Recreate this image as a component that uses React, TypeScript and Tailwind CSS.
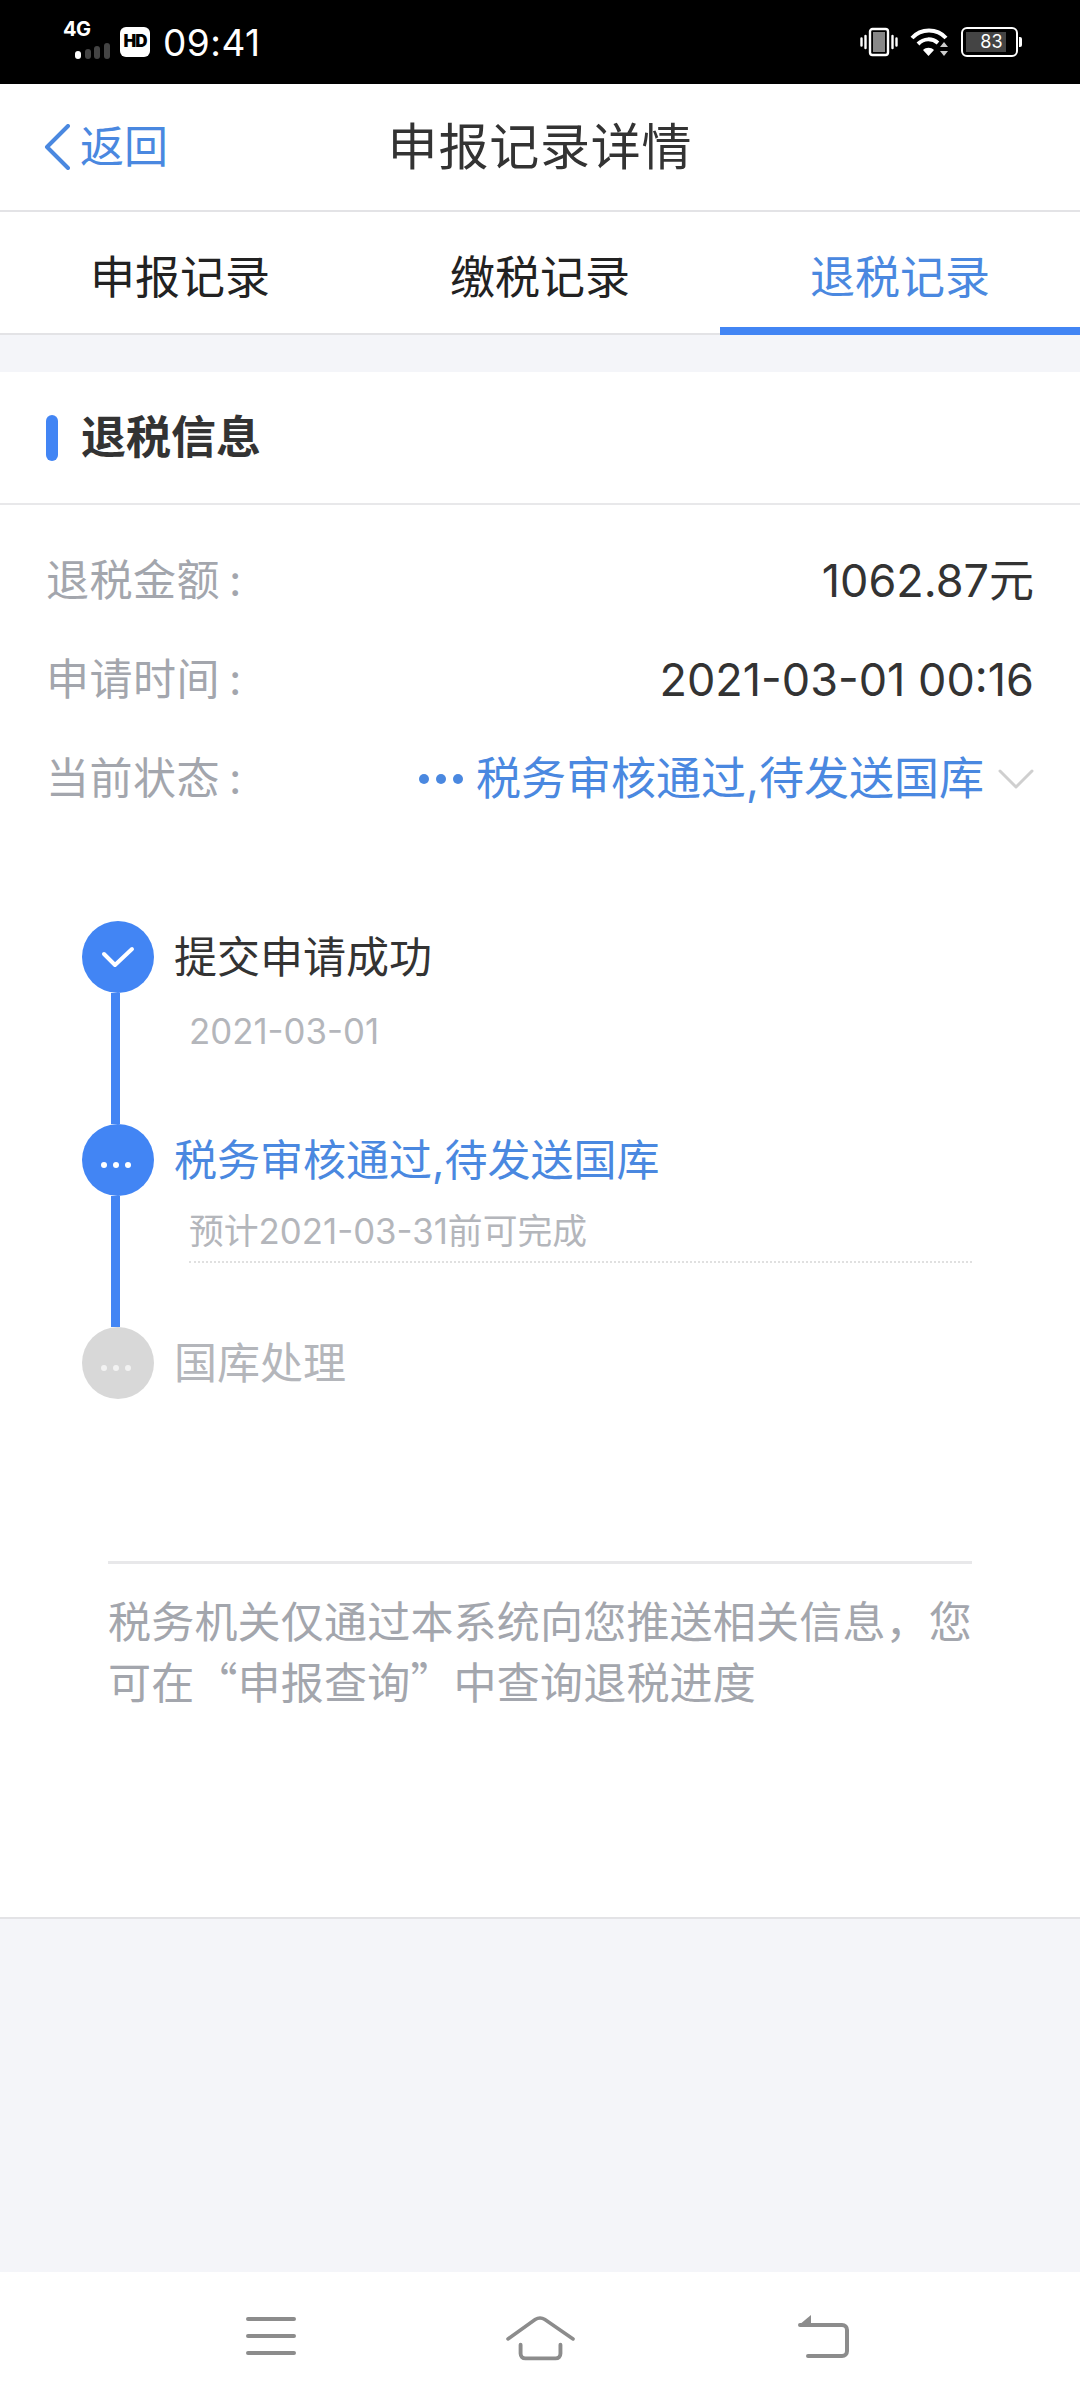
const FONT = "font-['Inter','Noto_Sans_CJK_SC',sans-serif]";

function StatusBar() {
  return (
    <div className="h-[84px] bg-black flex items-center justify-between pl-[63px] pr-[58px] text-white">
      <div className="flex items-center">
        <div className="w-[48px] h-[36px] relative mt-[-2px]">
          <span className="absolute left-0 top-[-6px] text-[20px] font-bold leading-[24px] tracking-[-0.5px]">4G</span>
          <div className="absolute left-[12px] bottom-0 flex items-end gap-[3.5px]">
            <span className="w-[6px] h-[8px] rounded-[3px] bg-white" />
            <span className="w-[6px] h-[10px] rounded-[3px] bg-[#444]" />
            <span className="w-[6px] h-[13px] rounded-[3px] bg-[#444]" />
            <span className="w-[6px] h-[16px] rounded-[3px] bg-[#444]" />
          </div>
        </div>
        <div className="ml-[9px] w-[30px] h-[30px] rounded-[6px] bg-white text-black flex items-center justify-center text-[17px] font-black tracking-[-1px]">
          HD
        </div>
        <span className="ml-[13px] text-[37px] leading-none tracking-[0.5px]">09:41</span>
      </div>
      <div className="flex items-center">
        <svg width="38" height="30" viewBox="0 0 38 30" fill="none">
          <rect x="10" y="2" width="18" height="26" rx="2.5" stroke="#fff" strokeWidth="2.4" />
          <rect x="13" y="5" width="12" height="20" fill="#888" />
          <path d="M5.5 9v12M1.5 11.5v7M32.5 9v12M36.5 11.5v7" stroke="#fff" strokeWidth="2.4" strokeLinecap="round" />
        </svg>
        <svg className="ml-[12px]" width="40" height="30" viewBox="0 0 40 30" fill="none">
          <path d="M2 11C11 1 27 1 36 11" stroke="#fff" strokeWidth="4" />
          <path d="M8 17C14 11 22 11 28 16" stroke="#fff" strokeWidth="4" />
          <path d="M13 23C16 20 21 20 24 23L18.500 29Z" fill="#fff" />
          <path d="M34 15l4 5h-8zM34 29l4-5h-8z" fill="#ccc" />
        </svg>
        <div className="ml-[11px] w-[57px] h-[30px] rounded-[6px] border-[2px] border-white p-[3px] relative">
          <div className="h-full w-[40px] bg-[#444]" />
          <span className="absolute inset-0 flex items-center justify-center text-[18px] leading-none pl-[4px]">83</span>
        </div>
        <span className="ml-[1px] w-[3px] h-[10px] rounded-r-[2px] bg-white" />
      </div>
    </div>
  );
}

function NavHeader() {
  return (
    <div className="h-[128px] bg-white border-b-2 border-[#e3e3e6] relative flex items-center justify-center">
      <div className="absolute left-[44px] top-0 h-full flex items-center text-[#4a88e0]">
        <svg width="26" height="46" viewBox="0 0 26 46" fill="none">
          <path d="M24 2L3 23l21 21" stroke="#4a88e0" strokeWidth="4" strokeLinecap="round" strokeLinejoin="round" />
        </svg>
        <span className="ml-[10px] text-[44px] leading-none">返回</span>
      </div>
      <span className="text-[50px] leading-none text-[#333] tracking-[0.8px]">申报记录详情</span>
    </div>
  );
}

function Tabs() {
  const tabs = ["申报记录", "缴税记录", "退税记录"];
  return (
    <div className="h-[123px] bg-white border-b-2 border-[#e3e3e6] grid grid-cols-3">
      {tabs.map((t, i) => (
        <div
          key={t}
          className={`flex items-center justify-center pt-[16px] text-[45px] leading-none border-b-[8px] mb-[-2px] ${
            i === 2 ? "text-[#4a88e0] border-[#4285f4]" : "text-[#222] border-transparent"
          }`}
        >
          {t}
        </div>
      ))}
    </div>
  );
}

function InfoRow({ label, children }: { label: string; children: React.ReactNode }) {
  return (
    <div className="flex items-center justify-between h-[99px] px-[46px]">
      <span className="text-[43px] leading-none text-[#a3a6ad] tracking-[0.5px]">
        {label}
        <span className="ml-[9px]">:</span>
      </span>
      {children}
    </div>
  );
}

function Dots({ color }: { color: string }) {
  return (
    <div className="flex gap-[6px] mt-[10px] mr-[4px]">
      <span className={`w-[6px] h-[6px] rounded-full ${color}`} />
      <span className={`w-[6px] h-[6px] rounded-full ${color}`} />
      <span className={`w-[6px] h-[6px] rounded-full ${color}`} />
    </div>
  );
}

function Step({
  state,
  title,
  sub,
  dashed,
  last,
}: {
  state: "done" | "active" | "todo";
  title: string;
  sub?: string;
  dashed?: boolean;
  last?: boolean;
}) {
  const titleColor = state === "done" ? "text-[#333]" : state === "active" ? "text-[#4a88e0]" : "text-[#b4b6bb]";
  return (
    <div className={`flex ${last ? "" : "h-[203px]"}`}>
      <div className="w-[72px] flex flex-col items-center shrink-0">
        <div
          className={`w-[72px] h-[72px] rounded-full flex items-center justify-center shrink-0 ${
            state === "todo" ? "bg-[#d8d8d8]" : "bg-[#4285f4]"
          }`}
        >
          {state === "done" ? (
            <svg width="34" height="24" viewBox="0 0 34 24" fill="none">
              <path d="M3 9l11 11L31 4" stroke="#fff" strokeWidth="4" strokeLinecap="round" strokeLinejoin="round" />
            </svg>
          ) : (
            <Dots color={state === "todo" ? "bg-[#f2f2f2]" : "bg-white"} />
          )}
        </div>
        {!last && <div className="w-[9px] flex-1 bg-[#4285f4] mr-[5px]" />}
      </div>
      <div className="ml-[20px] flex-1 min-w-0">
        <div className={`text-[43px] leading-[72px] ${titleColor}`}>{title}</div>
        {sub && (
          <div
            className={`ml-[15px] text-[34.8px] leading-[44px] text-[#b4b6bb] ${
              dashed ? "mt-[13px] border-b-2 border-dotted border-[#e0e0e0] pb-[8px]" : "mt-[16px]"
            }`}
          >
            {sub}
          </div>
        )}
      </div>
    </div>
  );
}

function Timeline() {
  return (
    <div className="pl-[82px] pr-[108px] pt-[93px]">
      <Step state="done" title="提交申请成功" sub="2021-03-01" />
      <Step state="active" title="税务审核通过,待发送国库" sub="预计2021-03-31前可完成" dashed />
      <Step state="todo" title="国库处理" last />
    </div>
  );
}

function BottomNav() {
  return (
    <div className="h-[128px] bg-white flex items-start pt-[45px] pl-[246px]">
      <svg width="50" height="40" viewBox="0 0 50 40" fill="none">
        <path d="M2 2h46M2 19h46M2 36h46" stroke="#8c8c8c" strokeWidth="4" strokeLinecap="round" />
      </svg>
      <svg className="mt-[-2px] ml-[210px]" width="70" height="46" viewBox="0 0 72 46" fill="none">
        <path d="M2 24L30 4c3-2 7-2 10 0l29 20" stroke="#8c8c8c" strokeWidth="3.600" strokeLinecap="round" />
        <path d="M15 30v9c0 3 2 5 5 5h31c3 0 5-2 5-5v-9" stroke="#8c8c8c" strokeWidth="4" strokeLinecap="round" />
      </svg>
      <svg className="mt-[-2px] ml-[222px]" width="52" height="44" viewBox="0 0 52 44" fill="none">
        <path d="M2 10h42c3 0 5 2 5 5v21c0 3-2 5-5 5H10" stroke="#8c8c8c" strokeWidth="4" strokeLinecap="round" />
        <path d="M1 10L13 0v10z" fill="#8c8c8c" />
      </svg>
    </div>
  );
}

export default function App() {
  return (
    <div className={`w-[1080px] h-[2400px] flex flex-col bg-[#f4f5f9] overflow-hidden ${FONT}`}>
      <StatusBar />
      <NavHeader />
      <Tabs />
      <div className="mt-[37px] bg-white h-[1547px] border-b-2 border-[#e3e3e6]">
        <div className="h-[133px] border-b-2 border-[#e8e8ea] flex items-center pl-[46px]">
          <span className="w-[12px] h-[46px] rounded-full bg-[#4285f4]" />
          <span className="ml-[23px] text-[45px] leading-none font-bold text-[#333]">退税信息</span>
        </div>
        <div className="pt-[26px]">
          <InfoRow label="退税金额">
            <span className="text-[45px] leading-none text-[#333]">1062.87元</span>
          </InfoRow>
          <InfoRow label="申请时间">
            <span className="text-[45px] leading-none text-[#333]">2021-03-01 00:16</span>
          </InfoRow>
          <InfoRow label="当前状态">
            <div className="flex items-center text-[#4a88e0]">
              <div className="flex gap-[7px] mr-[13px]">
                <span className="w-[10px] h-[10px] rounded-full bg-[#4a88e0]" />
                <span className="w-[10px] h-[10px] rounded-full bg-[#4a88e0]" />
                <span className="w-[10px] h-[10px] rounded-full bg-[#4a88e0]" />
              </div>
              <span className="text-[45px] leading-none">税务审核通过,待发送国库</span>
              <svg className="ml-[14px]" width="36" height="22" viewBox="0 0 36 22" fill="none">
                <path d="M2 3l16 16L34 3" stroke="#cfcfcf" strokeWidth="3" strokeLinecap="round" strokeLinejoin="round" />
              </svg>
            </div>
          </InfoRow>
        </div>
        <Timeline />
        <div className="mx-[108px] mt-[162px] border-t-[3px] border-[#e8e8ea] pt-[25px] font-['Noto_Sans_CJK_SC',sans-serif] text-[43px] leading-[61px] text-[#a3a6ad] tracking-[0.2px]">
          税务机关仅通过本系统向您推送相关信息，您可在“申报查询”中查询退税进度
        </div>
      </div>
      <div className="flex-1" />
      <BottomNav />
    </div>
  );
}
